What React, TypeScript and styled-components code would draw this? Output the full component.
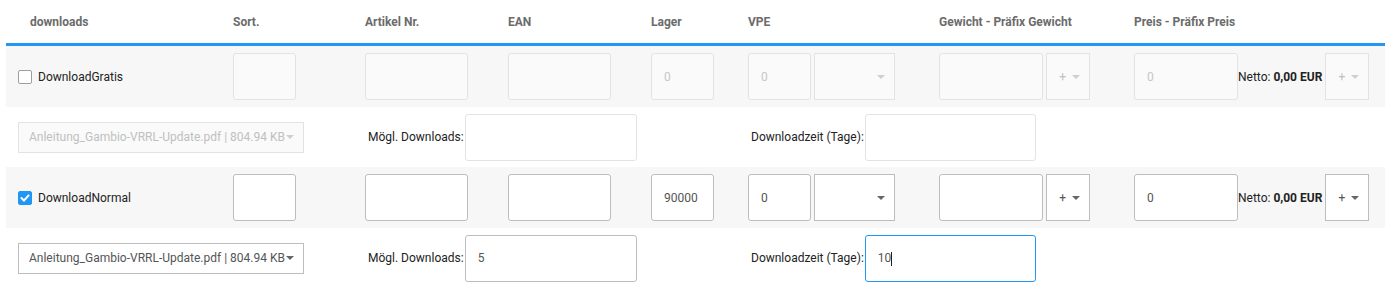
import styled, { createGlobalStyle } from 'styled-components';

const GlobalStyle = createGlobalStyle`
  * { box-sizing: border-box; }
  body {
    margin: 0;
    background: #fff;
    font-family: Roboto, "Liberation Sans", Arial, sans-serif;
    font-size: 12px;
    color: #333;
  }
`;

const COLUMNS = '215px 132px 143px 143px 97px 191px 195px 1fr';

const variants = [
  { id: 1, name: 'DownloadGratis', active: false, stock: '0', vpe: '0', price: '0', downloads: '', days: '' },
  { id: 2, name: 'DownloadNormal', active: true, stock: '90000', vpe: '0', price: '0', downloads: '5', days: '10' },
];

const headers = [
  'downloads',
  'Sort.',
  'Artikel Nr.',
  'EAN',
  'Lager',
  'VPE',
  'Gewicht - Präfix Gewicht',
  'Preis - Präfix Preis',
];

const Check = ({ checked }: { checked: boolean }) => (
  <CheckBox $checked={checked}>
    {checked && (
      <svg width="10" height="10" viewBox="0 0 10 10">
        <path d="M1.6 5.2 L4 7.5 L8.4 2.6" fill="none" stroke="#fff" strokeWidth="2" strokeLinecap="square" />
      </svg>
    )}
  </CheckBox>
);

const Select = ({
  value,
  width,
  height = 47,
  disabled,
  left,
}: {
  value?: string;
  width: number;
  height?: number;
  disabled: boolean;
  left?: boolean;
}) => (
  <SelectBox $width={width} $height={height} $disabled={disabled}>
    <SelectValue $left={left}>{value}</SelectValue>
    <Caret $disabled={disabled} />
  </SelectBox>
);

export default function App() {
  return (
    <Wrap>
      <GlobalStyle />
      <Head>
        {headers.map((h, i) => (
          <HeadCell key={h} $first={i === 0}>
            {h}
          </HeadCell>
        ))}
      </Head>

      {variants.map((v) => {
        const off = !v.active;
        return (
          <div key={v.id}>
            <MainRow>
              <Cell>
                <Check checked={v.active} />
                <Name>{v.name}</Name>
              </Cell>
              <Cell>
                <Field $width={63} $disabled={off} readOnly value="" />
              </Cell>
              <Cell>
                <Field $width={103} $disabled={off} readOnly value="" />
              </Cell>
              <Cell>
                <Field $width={103} $disabled={off} readOnly value="" />
              </Cell>
              <Cell>
                <Field $width={63} $disabled={off} readOnly value={v.stock} />
              </Cell>
              <Cell>
                <Field $width={63} $disabled={off} readOnly value={v.vpe} />
                <Select width={81} disabled={off} />
              </Cell>
              <Cell>
                <Field $width={104} $disabled={off} readOnly value="" />
                <Select width={44} value="+" disabled={off} />
              </Cell>
              <Cell>
                <Field $width={104} $disabled={off} readOnly value={v.price} />
                <Netto>
                  Netto: <b>0,00 EUR</b>
                </Netto>
                <Select width={44} value="+" disabled={off} />
              </Cell>
            </MainRow>

            <SubRow>
              <Select
                width={286}
                height={31}
                disabled={off}
                left
                value="Anleitung_Gambio-VRRL-Update.pdf | 804.94 KB"
              />
              <Pair>
                <PairLabel>Mögl. Downloads:</PairLabel>
                <Field $width={172} $disabled={off} $plain readOnly value={v.downloads} />
              </Pair>
              <Pair>
                <PairLabel>Downloadzeit (Tage):</PairLabel>
                {v.active ? (
                  <FieldWrap>
                    <FocusedField $width={171} readOnly value={v.days} />
                    <TextCursor />
                  </FieldWrap>
                ) : (
                  <Field $width={171} $disabled $plain readOnly value={v.days} />
                )}
              </Pair>
            </SubRow>
          </div>
        );
      })}
    </Wrap>
  );
}

const Wrap = styled.div`
  padding-left: 6px;
`;

const Head = styled.div`
  display: grid;
  grid-template-columns: ${COLUMNS};
  height: 46px;
  border-bottom: 3px solid #2196f3;
  align-items: center;
`;

const HeadCell = styled.div<{ $first?: boolean }>`
  padding-left: ${(p) => (p.$first ? 24 : 12)}px;
  font-weight: 700;
  color: #6b6b6b;
  white-space: nowrap;
`;

const MainRow = styled.div`
  display: grid;
  grid-template-columns: ${COLUMNS};
  height: 61px;
  background: #f7f7f7;
  align-items: center;
`;

const Cell = styled.div`
  display: flex;
  align-items: center;
  gap: 3px;
  padding-left: 12px;
`;

const CheckBox = styled.span<{ $checked: boolean }>`
  display: inline-flex;
  align-items: center;
  justify-content: center;
  width: 14px;
  height: 14px;
  border-radius: 2px;
  border: 1px solid ${(p) => (p.$checked ? '#2196f3' : '#9e9e9e')};
  background: ${(p) => (p.$checked ? '#2196f3' : '#fff')};
  margin-right: 3px;
`;

const Name = styled.span`
  color: #222;
  font-size: 12px;
`;

const FieldWrap = styled.div`
  position: relative;
  display: flex;
`;

const TextCursor = styled.span`
  position: absolute;
  left: 26px;
  top: 17px;
  width: 1px;
  height: 14px;
  background: #222;
`;

const Field = styled.input<{ $width: number; $disabled?: boolean; $plain?: boolean }>`
  width: ${(p) => p.$width}px;
  height: 47px;
  padding: 0 12px;
  border-radius: 3px;
  border: 1px solid ${(p) => (p.$disabled ? '#e3e3e3' : '#bdbdbd')};
  background: ${(p) => (p.$disabled && !p.$plain ? '#fafafa' : '#fff')};
  color: ${(p) => (p.$disabled ? '#c6c6c6' : '#555')};
  font-family: inherit;
  font-size: 12px;
  outline: none;
  flex-shrink: 0;
`;

const FocusedField = styled(Field)`
  border: 1px solid #2196f3;
  background: #fff;
`;

const SelectBox = styled.div<{ $width: number; $height: number; $disabled: boolean }>`
  display: flex;
  align-items: center;
  width: ${(p) => p.$width}px;
  height: ${(p) => p.$height}px;
  padding: 0 9px 0 10px;
  border: 1px solid ${(p) => (p.$disabled ? '#e3e3e3' : '#bdbdbd')};
  background: ${(p) => (p.$disabled ? '#fafafa' : '#fff')};
  color: ${(p) => (p.$disabled ? '#c0c0c0' : '#555')};
  flex-shrink: 0;
  white-space: nowrap;
`;

const SelectValue = styled.span<{ $left?: boolean }>`
  flex: 1;
  text-align: ${(p) => (p.$left ? 'left' : 'right')};
  padding-right: 6px;
  overflow: hidden;
  font-size: 12px;
`;

const Caret = styled.span<{ $disabled: boolean }>`
  width: 0;
  height: 0;
  border-left: 4px solid transparent;
  border-right: 4px solid transparent;
  border-top: 4px solid ${(p) => (p.$disabled ? '#cfcfcf' : '#666')};
`;

const Netto = styled.span`
  color: #222;
  white-space: nowrap;
  margin-left: -3px;
  b {
    font-weight: 700;
  }
`;

const SubRow = styled.div`
  display: grid;
  grid-template-columns: 350px 383px 1fr;
  align-items: center;
  height: 60px;
  padding-left: 12px;
  background: #fff;
`;

const Pair = styled.div`
  display: flex;
  align-items: center;
  gap: 1px;
`;

const PairLabel = styled.span`
  color: #222;
  white-space: nowrap;
`;
